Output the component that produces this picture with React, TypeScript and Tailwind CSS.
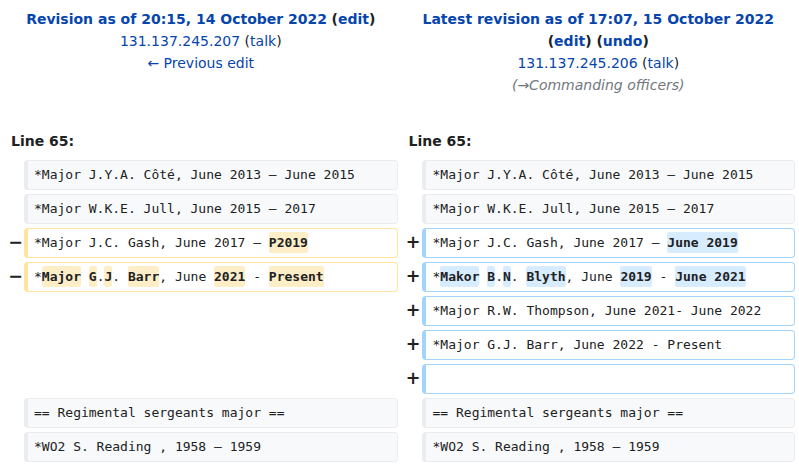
type Seg = string | { hl: string };
type Side = { kind: "context" | "del" | "add" | "empty"; segs?: Seg[] };

const rows: Array<[Side, Side]> = [
  [
    { kind: "context", segs: ["*Major J.Y.A. Côté, June 2013 – June 2015"] },
    { kind: "context", segs: ["*Major J.Y.A. Côté, June 2013 – June 2015"] },
  ],
  [
    { kind: "context", segs: ["*Major W.K.E. Jull, June 2015 – 2017"] },
    { kind: "context", segs: ["*Major W.K.E. Jull, June 2015 – 2017"] },
  ],
  [
    { kind: "del", segs: ["*Major J.C. Gash, June 2017 – ", { hl: "P2019" }] },
    { kind: "add", segs: ["*Major J.C. Gash, June 2017 – ", { hl: "June 2019" }] },
  ],
  [
    {
      kind: "del",
      segs: ["*", { hl: "Major" }, " ", { hl: "G" }, ".", { hl: "J" }, ". ", { hl: "Barr" }, ", June ", { hl: "2021" }, " - ", { hl: "Present" }],
    },
    {
      kind: "add",
      segs: ["*", { hl: "Makor" }, " ", { hl: "B" }, ".", { hl: "N" }, ". ", { hl: "Blyth" }, ", June ", { hl: "2019" }, " - ", { hl: "June 2021" }],
    },
  ],
  [{ kind: "empty" }, { kind: "add", segs: ["*Major R.W. Thompson, June 2021- June 2022"] }],
  [{ kind: "empty" }, { kind: "add", segs: ["*Major G.J. Barr, June 2022 - Present"] }],
  [{ kind: "empty" }, { kind: "add", segs: [] }],
  [
    { kind: "context", segs: ["== Regimental sergeants major =="] },
    { kind: "context", segs: ["== Regimental sergeants major =="] },
  ],
  [
    { kind: "context", segs: ["*WO2 S. Reading , 1958 – 1959"] },
    { kind: "context", segs: ["*WO2 S. Reading , 1958 – 1959"] },
  ],
];

const mono = { fontFamily: '"DejaVu Sans Mono", monospace' };

function Cell({ side, right }: { side: Side; right?: boolean }) {
  if (side.kind === "empty") {
    return (
      <>
        <div />
        <div />
      </>
    );
  }
  const marker = side.kind === "del" ? "−" : side.kind === "add" ? "+" : "";
  const box =
    side.kind === "context"
      ? "bg-[#f8f9fa] border-[#eaecf0]"
      : side.kind === "del"
        ? "bg-white border-[#ffe49c]"
        : "bg-white border-[#a3d3ff]";
  const hl = side.kind === "del" ? "bg-[#feeec8]" : "bg-[#d8ecff]";
  return (
    <>
      <div className="flex items-center justify-end text-[17.5px] font-bold leading-none text-[#202122] -mr-[3px]">
        {marker}
      </div>
      <div
        className={`min-w-0 border border-l-4 rounded-[4px] py-[3px] text-[13px] leading-[22px] text-[#202122] whitespace-pre ${right ? "pl-[7px] pr-[6px]" : "px-[6px]"} ${box}`}
        style={mono}
      >
        {side.segs && side.segs.length > 0
          ? side.segs.map((s, i) =>
              typeof s === "string" ? (
                <span key={i}>{s}</span>
              ) : (
                <span key={i} className={`font-bold rounded-[2px] py-[3px] ${hl}`}>
                  {s.hl}
                </span>
              ),
            )
          : "\u00a0"}
      </div>
    </>
  );
}

export default function App() {
  return (
    <div
      className="w-[799px] bg-white text-[14px] leading-[22px] text-[#202122]"
      style={{ fontFamily: '"DejaVu Sans", sans-serif' }}
    >
      <div className="grid grid-cols-[16px_minmax(0,1fr)_16px_minmax(0,1fr)] gap-[4px] p-[4px]">
        <div className="col-span-2 pt-[4px] text-center">
          <div>
            <a className="font-bold text-[#0645ad]">Revision as of 20:15, 14 October 2022</a>{" "}
            <span className="font-bold">
              (<a className="text-[#0645ad]">edit</a>)
            </span>
          </div>
          <div>
            <a className="text-[#0645ad]">131.137.245.207</a> (<a className="text-[#0645ad]">talk</a>)
          </div>
          <div>
            <a className="text-[#0645ad]">← Previous edit</a>
          </div>
        </div>
        <div className="col-span-2 pt-[4px] text-center">
          <div className="px-[20px]">
            <a className="font-bold text-[#0645ad]">Latest revision as of 17:07, 15 October 2022</a>{" "}
            <span className="font-bold">
              (<a className="text-[#0645ad]">edit</a>) (<a className="text-[#0645ad]">undo</a>)
            </span>
          </div>
          <div>
            <a className="text-[#0645ad]">131.137.245.206</a> (<a className="text-[#0645ad]">talk</a>)
          </div>
          <div className="italic text-[#72777d]">(→Commanding officers)</div>
        </div>

        <div className="col-span-2 pt-[30px] pb-[4px] pl-[7px] font-bold">Line 65:</div>
        <div className="col-span-2 pt-[30px] pb-[4px] pl-[7px] font-bold">Line 65:</div>

        {rows.map(([l, r], i) => (
          <div key={i} className="contents">
            <Cell side={l} />
            <Cell side={r} right />
          </div>
        ))}
      </div>
    </div>
  );
}
